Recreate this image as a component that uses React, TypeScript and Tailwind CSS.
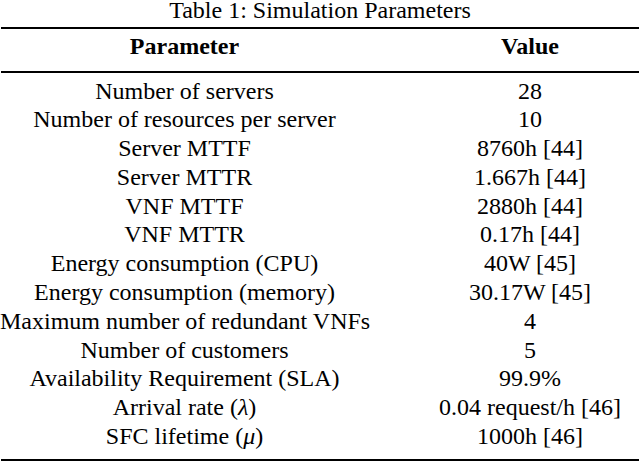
import React from 'react';

const rows: [React.ReactNode, string][] = [
    ['Number of servers', '28'],
    ['Number of resources per server', '10'],
    ['Server MTTF', '8760h [44]'],
    ['Server MTTR', '1.667h [44]'],
    ['VNF MTTF', '2880h [44]'],
    ['VNF MTTR', '0.17h [44]'],
    ['Energy consumption (CPU)', '40W [45]'],
    ['Energy consumption (memory)', '30.17W [45]'],
    ['Maximum number of redundant VNFs', '4'],
    ['Number of customers', '5'],
    ['Availability Requirement (SLA)', '99.9%'],
    [<>Arrival rate (<i>λ</i>)</>, '0.04 request/h [46]'],
    [<>SFC lifetime (<i>μ</i>)</>, '1000h [46]'],
];

const App: React.FC = () => {
    return (
        <div className="w-[640px] h-[463px] bg-white text-black overflow-hidden [font-family:'Liberation_Serif','Times_New_Roman',serif] text-[24px]">
            <div className="text-center leading-[20px] mb-[7px]">Table 1: Simulation Parameters</div>
            <div className="mx-[1px] h-[2px] bg-black" />
            <div className="grid grid-cols-[369px_1fr] font-bold leading-[29px] pt-[3px] pb-[10px]">
                <div className="text-center">Parameter</div>
                <div className="text-center pl-[53px] pr-[2px]">Value</div>
            </div>
            <div className="mx-[1px] h-[1.5px] bg-black" />
            <div className="grid grid-cols-[369px_1fr] leading-[28.8px] pt-[4px] pb-[8px]">
                {rows.map(([name, value], i) => (
                    <React.Fragment key={i}>
                        <div className="text-center whitespace-nowrap">{name}</div>
                        <div className="text-center whitespace-nowrap pl-[53px] pr-[2px]">{value}</div>
                    </React.Fragment>
                ))}
            </div>
            <div className="mx-[1px] h-[2px] bg-black" />
        </div>
    );
};

export default App;
